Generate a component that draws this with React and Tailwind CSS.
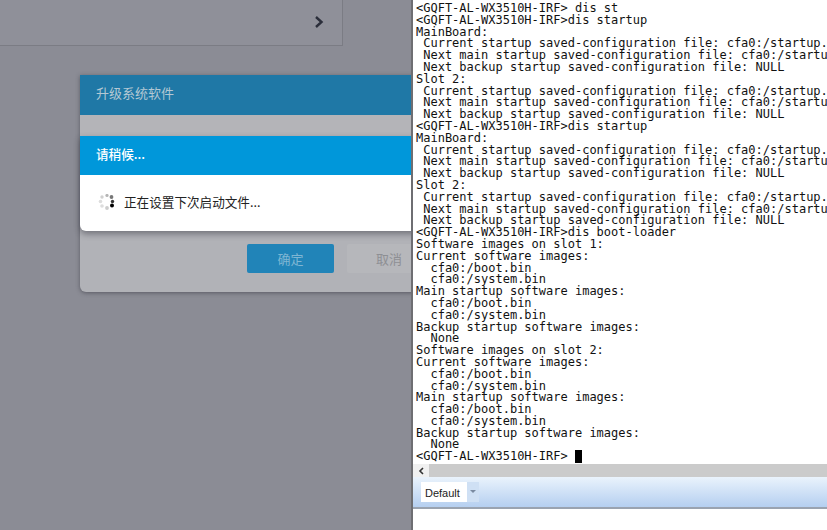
const CUR = " Current startup saved-configuration file: cfa0:/startup.";
const MAIN = " Next main startup saved-configuration file: cfa0:/startu";
const BAK = " Next backup startup saved-configuration file: NULL";
const lines = [
  "<GQFT-AL-WX3510H-IRF> dis st",
  "<GQFT-AL-WX3510H-IRF>dis startup",
  "MainBoard:",
  CUR,
  MAIN,
  BAK,
  "Slot 2:",
  CUR,
  MAIN,
  BAK,
  "<GQFT-AL-WX3510H-IRF>dis startup",
  "MainBoard:",
  CUR,
  MAIN,
  BAK,
  "Slot 2:",
  CUR,
  MAIN,
  BAK,
  "<GQFT-AL-WX3510H-IRF>dis boot-loader",
  "Software images on slot 1:",
  "Current software images:",
  "  cfa0:/boot.bin",
  "  cfa0:/system.bin",
  "Main startup software images:",
  "  cfa0:/boot.bin",
  "  cfa0:/system.bin",
  "Backup startup software images:",
  "  None",
  "Software images on slot 2:",
  "Current software images:",
  "  cfa0:/boot.bin",
  "  cfa0:/system.bin",
  "Main startup software images:",
  "  cfa0:/boot.bin",
  "  cfa0:/system.bin",
  "Backup startup software images:",
  "  None",
];

const dots = [
  [14, 11.5, 2, "#000000"],
  [14.5, 7.5, 1.7, "#333333"],
  [13.5, 3, 1.9, "#777777"],
  [9, 1.5, 1.6, "#b5b5b5"],
  [4, 3, 1.7, "#d0d0d0"],
  [2.5, 7.5, 1.8, "#dddddd"],
  [4, 12, 1.8, "#dddddd"],
  [9, 14, 1.9, "#cccccc"],
];

export default function App() {
  return (
    <div className="flex h-[530px] w-[827px] overflow-hidden bg-white">
      <div className="h-full w-[411px] shrink-0 overflow-hidden bg-[#8b8c95] font-['Noto_Sans_CJK_SC','Noto_Sans',sans-serif]">
        <div className="flex h-[46px] w-[343px] items-center justify-end border-r border-b border-[#7b7c84] bg-[#8f9099] pr-[18px]">
          <svg width="10" height="14" viewBox="0 0 10 14" fill="none" className="mt-[-2px]">
            <path d="M2 2 L7.5 7 L2 12" stroke="#2b2e3a" strokeWidth="2.4" />
          </svg>
        </div>
        <div className="mt-[29px] ml-[80px] h-[217px] w-[400px] rounded-b-md bg-[#b1b2b7] shadow-[0_1px_4px_rgba(40,40,50,0.5)]">
          <div className="flex h-[40px] items-center bg-[#1f78a6] pb-[4px] pl-4 text-[13px] text-[#b4c8d4]">升级系统软件</div>
          <div className="h-[21px] bg-[#b4b4b8]" />
          <div className="rounded-b-md bg-white shadow-[0_3px_6px_rgba(40,40,50,0.45)]">
            <div className="flex h-[39px] items-center bg-[#0097da] pb-[3px] pl-4 text-[12.6px] font-medium text-white">请稍候...</div>
            <div className="flex h-[56px] items-center pb-px pl-[18px] text-[12.6px] text-[#222222]">
              <svg width="17" height="17" viewBox="0 0 17 17" className="mr-[9px] shrink-0">
                {dots.map(([cx, cy, r, fill], i) => (
                  <circle key={i} cx={cx} cy={cy} r={r} fill={fill} />
                ))}
              </svg>
              正在设置下次启动文件...
            </div>
          </div>
          <div className="mt-[13px] flex items-center pl-[167px]">
            <div className="flex h-[29px] w-[87px] items-center justify-center rounded-[2px] bg-[#2184b8] text-[13px] text-[#7fb6d3]">确定</div>
            <div className="ml-[13px] flex h-[29px] w-[84px] items-center justify-center rounded-[2px] bg-[#b6b7bb] text-[13px] text-[#8e8f94]">取消</div>
          </div>
        </div>
      </div>

      <div className="flex h-full min-w-0 flex-1 flex-col border-l-2 border-[#6e6e72] bg-white">
        <div className="h-[464px] overflow-hidden pt-[3px] pl-[3px] font-['DejaVu_Sans_Mono',monospace] text-[12px] leading-[11.8px] whitespace-pre text-[#111111]">
          {lines.map((l, i) => (
            <div key={i} className="h-[11.8px]">{l}</div>
          ))}
          <div className="flex h-[11.8px]">
            <span>{"<GQFT-AL-WX3510H-IRF> "}</span>
            <span className="mt-[-1px] h-[13px] w-[7px] bg-black" />
          </div>
        </div>
        <div className="flex h-[13px] items-center bg-[#cbcbcb]">
          <div className="flex h-full w-[16px] items-center justify-center bg-[#f0f0f0]">
            <svg width="7" height="8" viewBox="0 0 7 8" fill="none">
              <path d="M5 1 L2 4 L5 7" stroke="#333333" strokeWidth="1.6" />
            </svg>
          </div>
        </div>
        <div className="flex h-[32px] items-center border-b-2 border-[#9aa3b0] bg-gradient-to-b from-[#eaf3fc] to-[#b5cff0] pl-2">
          <div className="flex h-[20px] w-[58px] items-center bg-white pl-[4px] font-['Liberation_Sans',sans-serif] text-[11px] text-[#222222]">
            <span className="flex-1 pt-[2px]">Default</span>
            <span className="flex h-full w-[12px] items-center justify-center bg-[#cfe0f4]">
              <svg width="6" height="4" viewBox="0 0 6 4"><path d="M0 0 H6 L3 3 Z" fill="#7a8aa0" /></svg>
            </span>
          </div>
        </div>
        <div className="flex-1 bg-white" />
      </div>
    </div>
  );
}
